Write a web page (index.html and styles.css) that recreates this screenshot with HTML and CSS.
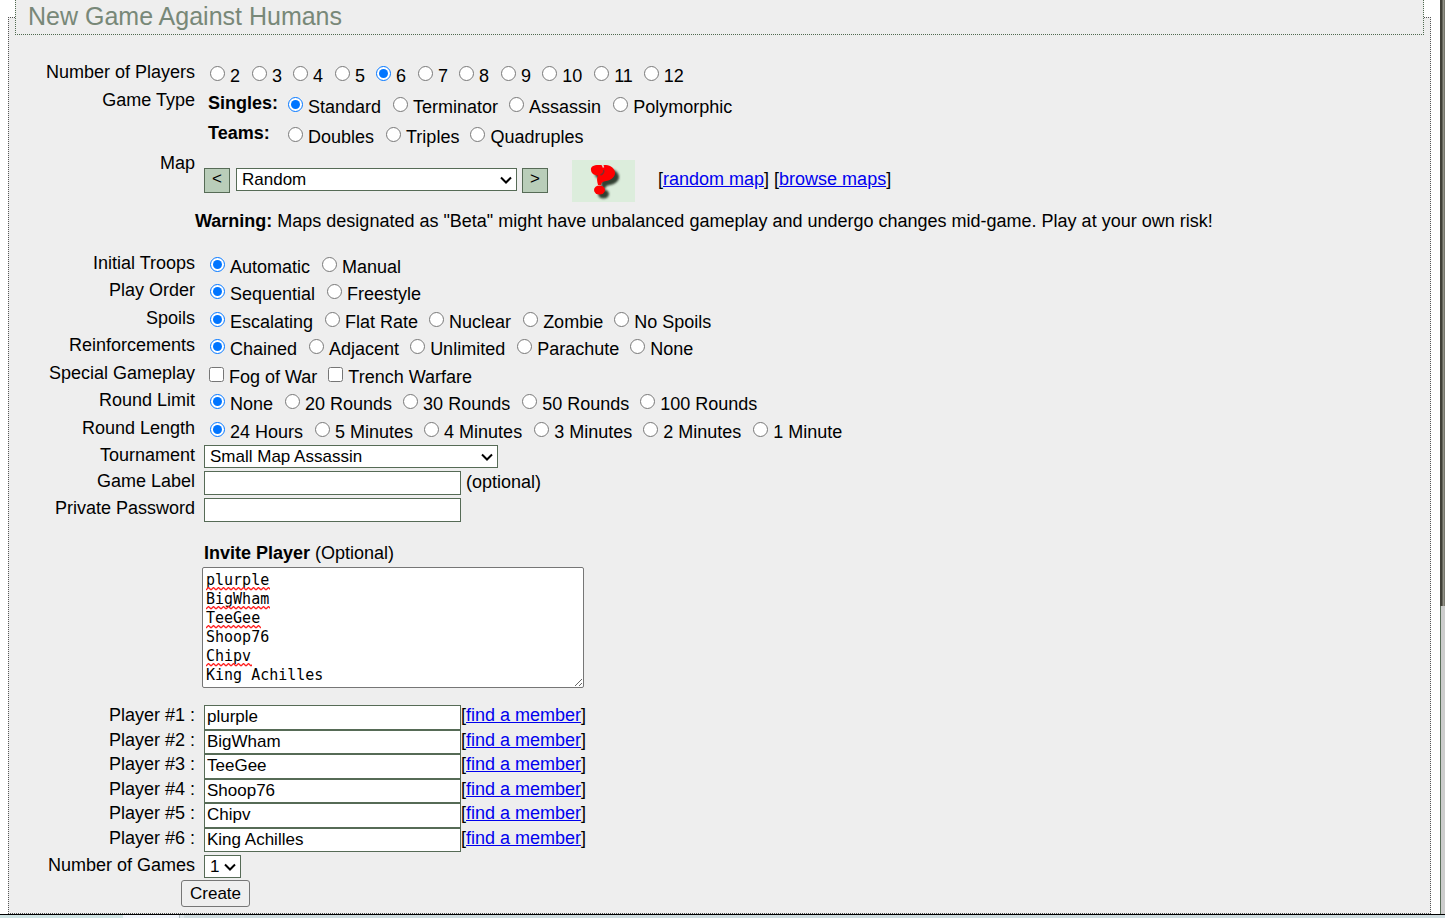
FILE: index.html
```html
<!DOCTYPE html>
<html lang="en">
<head>
<meta charset="utf-8">
<title>New Game Against Humans</title>
<link rel="stylesheet" href="styles.css">
</head>
<body>
<div class="viewport">
<main>
<form>
<fieldset class="panel">
<legend class="title">New Game Against Humans</legend>
<div class="row tall" role="radiogroup" aria-labelledby="l-players"><span class="name" id="l-players">Number of Players</span>
<div class="choices">
<label><input type="radio" name="players">2</label><label><input type="radio" name="players">3</label><label><input type="radio" name="players">4</label><label><input type="radio" name="players">5</label><label><input type="radio" name="players" checked>6</label><label><input type="radio" name="players">7</label><label><input type="radio" name="players">8</label><label><input type="radio" name="players">9</label><label><input type="radio" name="players">10</label><label><input type="radio" name="players">11</label><label><input type="radio" name="players">12</label>
</div></div>
<div class="row type" role="radiogroup" aria-labelledby="l-type"><span class="name" id="l-type">Game Type</span>
<div class="types">
<div class="group"><b>Singles:</b><div class="choices"><label><input type="radio" name="type" checked>Standard</label><label><input type="radio" name="type">Terminator</label><label><input type="radio" name="type">Assassin</label><label><input type="radio" name="type">Polymorphic</label></div></div>
<div class="group"><b>Teams:</b><div class="choices"><label><input type="radio" name="type">Doubles</label><label><input type="radio" name="type">Triples</label><label><input type="radio" name="type">Quadruples</label></div></div>
</div></div>
<div class="row"><label class="name" for="map">Map</label>
<div class="map">
<button class="step" type="button" aria-label="Previous map">&lt;</button>
<select id="map" class="map-select"><option>Random</option></select>
<button class="step" type="button" aria-label="Next map">&gt;</button>
<svg class="thumb" viewBox="0 0 63 42" aria-hidden="true">
<defs><filter id="soft" x="-30%" y="-30%" width="160%" height="160%"><feGaussianBlur stdDeviation="1.3"/></filter>
<g id="mark"><path d="M19 10C18 6 24 4 31 5.500C37 3.500 43 8 43 13C43 18 38 20.500 32 21.500C30 22 29.500 23 29 25H26C25 21 24.500 18 26 15.500C22 15.500 19 13 19 10Z"/><ellipse cx="27.500" cy="30" rx="5.500" ry="4.500"/></g></defs>
<rect width="63" height="42" fill="#dceddc"/>
<use href="#mark" x="4" y="4" fill="#334033" filter="url(#soft)"/>
<use href="#mark" fill="#ff0000"/>
<path d="M28.500 15C31 14 32.500 12 31.500 10" fill="none" stroke="#7a3030" stroke-width="1.500"/>
<path d="M30.500 5L31.500 7.500" stroke="#dceddc" stroke-width="1.500"/>
</svg>
<span>[<a href="#random">random map</a>] [<a href="#browse">browse maps</a>]</span>
</div></div>
<p class="warning"><b>Warning:</b> Maps designated as "Beta" might have unbalanced gameplay and undergo changes mid-game. Play at your own risk!</p>
<div class="options">
<div class="row" role="radiogroup" aria-labelledby="l-troops"><span class="name" id="l-troops">Initial Troops</span><div class="choices"><label><input type="radio" name="troops" checked>Automatic</label><label><input type="radio" name="troops">Manual</label></div></div>
<div class="row" role="radiogroup" aria-labelledby="l-order"><span class="name" id="l-order">Play Order</span><div class="choices"><label><input type="radio" name="order" checked>Sequential</label><label><input type="radio" name="order">Freestyle</label></div></div>
<div class="row" role="radiogroup" aria-labelledby="l-spoils"><span class="name" id="l-spoils">Spoils</span><div class="choices"><label><input type="radio" name="spoils" checked>Escalating</label><label><input type="radio" name="spoils">Flat Rate</label><label><input type="radio" name="spoils">Nuclear</label><label><input type="radio" name="spoils">Zombie</label><label><input type="radio" name="spoils">No Spoils</label></div></div>
<div class="row" role="radiogroup" aria-labelledby="l-reinf"><span class="name" id="l-reinf">Reinforcements</span><div class="choices"><label><input type="radio" name="reinf" checked>Chained</label><label><input type="radio" name="reinf">Adjacent</label><label><input type="radio" name="reinf">Unlimited</label><label><input type="radio" name="reinf">Parachute</label><label><input type="radio" name="reinf">None</label></div></div>
<div class="row" role="group" aria-labelledby="l-special"><span class="name" id="l-special">Special Gameplay</span><div class="choices checks"><label><input type="checkbox" name="fog">Fog of War</label><label><input type="checkbox" name="trench">Trench Warfare</label></div></div>
<div class="row" role="radiogroup" aria-labelledby="l-limit"><span class="name" id="l-limit">Round Limit</span><div class="choices"><label><input type="radio" name="limit" checked>None</label><label><input type="radio" name="limit">20 Rounds</label><label><input type="radio" name="limit">30 Rounds</label><label><input type="radio" name="limit">50 Rounds</label><label><input type="radio" name="limit">100 Rounds</label></div></div>
<div class="row" role="radiogroup" aria-labelledby="l-length"><span class="name" id="l-length">Round Length</span><div class="choices"><label><input type="radio" name="length" checked>24 Hours</label><label><input type="radio" name="length">5 Minutes</label><label><input type="radio" name="length">4 Minutes</label><label><input type="radio" name="length">3 Minutes</label><label><input type="radio" name="length">2 Minutes</label><label><input type="radio" name="length">1 Minute</label></div></div>
</div>
<div class="row"><label class="name" for="tournament">Tournament</label><select id="tournament" class="tournament"><option>Small Map Assassin</option></select></div>
<div class="row field"><label class="name" for="label">Game Label</label><input id="label" class="text" type="text"><span class="hint">(optional)</span></div>
<div class="row field"><label class="name" for="password">Private Password</label><input id="password" class="text" type="text"></div>
<div class="invite">
<label for="invite"><b>Invite Player</b> (Optional)</label>
<div class="invite-box">
<textarea id="invite" spellcheck="false">plurple
BigWham
TeeGee
Shoop76
Chipv
King Achilles</textarea>
<svg class="spelling" width="70" height="120" aria-hidden="true">
<defs><pattern id="wave" y="1" width="5" height="19" patternUnits="userSpaceOnUse"><path d="M0 3L2.500 0.500L5 3" fill="none" stroke="#ff2020" stroke-width="1.300"/></pattern></defs>
<g fill="url(#wave)"><rect y="20" width="64" height="4"/><rect y="39" width="64" height="4"/><rect y="58" width="55" height="4"/><rect y="96" width="46" height="4"/></g>
</svg>
</div></div>
<div class="members">
<div class="row"><label class="name" for="p1">Player #1 :</label><input id="p1" class="text" type="text" value="plurple"><span>[<a href="#find1">find a member</a>]</span></div>
<div class="row"><label class="name" for="p2">Player #2 :</label><input id="p2" class="text" type="text" value="BigWham"><span>[<a href="#find2">find a member</a>]</span></div>
<div class="row"><label class="name" for="p3">Player #3 :</label><input id="p3" class="text" type="text" value="TeeGee"><span>[<a href="#find3">find a member</a>]</span></div>
<div class="row"><label class="name" for="p4">Player #4 :</label><input id="p4" class="text" type="text" value="Shoop76"><span>[<a href="#find4">find a member</a>]</span></div>
<div class="row"><label class="name" for="p5">Player #5 :</label><input id="p5" class="text" type="text" value="Chipv"><span>[<a href="#find5">find a member</a>]</span></div>
<div class="row"><label class="name" for="p6">Player #6 :</label><input id="p6" class="text" type="text" value="King Achilles"><span>[<a href="#find6">find a member</a>]</span></div>
</div>
<div class="row games"><label class="name" for="games">Number of Games</label><select id="games" class="count"><option>1</option></select></div>
<button class="create" type="button">Create</button>
</fieldset>
</form>
</main>
<div class="rail"><div class="thumb-bar"></div></div>
</div>
<div class="strip"></div>
</body>
</html>
```

FILE: styles.css
```css
* { box-sizing: border-box; }
body {
  margin: 0;
  background: #fff;
  color: #000;
  font: 18px/20px "Liberation Sans", Arial, sans-serif;
  min-height: 100vh;
  display: flex;
  flex-direction: column;
}
a { color: #0000ee; }
.viewport { flex: 1; display: grid; grid-template-columns: 1fr 5px; }
main { display: flex; }
form { flex: 1; display: flex; padding: 0 9px 0 8px; }
.panel {
  flex: 1;
  min-width: 0;
  margin: 0;
  padding: 0 6px 5px;
  border: 1px dotted #555;
  background: #eee;
}
.title {
  width: 100%;
  padding: 2px 12px 4px;
  border: 1px dotted #4f6a4f;
  border-top: 0;
  background: #eee;
  color: #788878;
  font-size: 25px;
  line-height: 28px;
  margin-bottom: 27px;
}
.row { display: flex; }
.name { width: 180px; margin-right: 9px; flex: none; text-align: right; }
.tall { min-height: 28px; }
.choices { display: flex; gap: 11px; padding: 4px 0 0 6px; }
.choices label { display: flex; gap: 5px; }
.choices label:nth-child(odd) { margin-right: 1px; }
.choices input { width: 15px; height: 15px; margin: 0; accent-color: #0075ff; }
.choices.checks { gap: 10px; padding-left: 5px; }
.types { padding-top: 3px; }
.group { display: flex; height: 30px; }
.group b { width: 78px; padding-left: 4px; }
.type { min-height: 63px; }
.map { display: flex; padding-top: 7px; height: 49px; }
select, input, button { font: 17px/20px "Liberation Sans", Arial, sans-serif; color: #000; }
.step {
  width: 26px;
  height: 25px;
  margin-top: 8px;
  padding: 0 0 3px;
  border: 1px solid #566b56;
  background: #b9cdb9;
  line-height: 20px;
}
select {
  appearance: none;
  height: 23px;
  padding: 0 20px 0 5px;
  border: 1px solid #566b56;
  border-radius: 0;
  background: #fff url("data:image/svg+xml,%3Csvg xmlns='http://www.w3.org/2000/svg' width='12' height='8'%3E%3Cpath d='M1 1.500L6 6.500L11 1.500' fill='none' stroke='%23000' stroke-width='2'/%3E%3C/svg%3E") no-repeat right 4px center;
}
.map-select { width: 281px; margin: 8px 5px 0 6px; }
.thumb { width: 63px; height: 42px; margin: 0 23px 0 24px; }
.map span { padding-top: 9px; }
.warning { margin: 9px 0 22px 180px; }
.options .row { min-height: 27px; }
.options .row:nth-child(even) { min-height: 28px; }
.field { min-height: 27px; }
.row + .field:not(.field + .field) { margin-top: 3px; }
.text { width: 257px; height: 24px; border: 1px solid #566b56; padding: 1px 3px; background: #fff; }
.tournament { width: 294px; }
.hint { padding: 1px 0 0 5px; }
.invite { padding: 18px 0 0 187px; }
.invite > label { padding-left: 2px; }
.invite-box { position: relative; width: 382px; height: 121px; margin: 4px 0 17px; }
textarea {
  display: block;
  width: 100%;
  height: 100%;
  margin: 0;
  padding: 3px 3px 1px;
  border: 1px solid #767676;
  border-radius: 2px;
  font: 15px/19px "DejaVu Sans Mono", monospace;
  color: #000;
  overflow: hidden;
}
.spelling { position: absolute; left: 4px; top: 0; pointer-events: none; }
.members .row { height: 25px; }
.members .row:nth-child(even) { height: 24px; }
.members .text { height: 100%; padding: 0 2px 1px; }
.games { min-height: 28px; padding-top: 3px; }
.games select { align-self: flex-start; }
.count { width: 37px; }
.create {
  display: block;
  width: 69px;
  height: 27px;
  margin: 0 0 0 166px;
  padding: 0;
  border: 1px solid #767676;
  border-radius: 3px;
  background: #efefef;
}
.rail { border-left: 1px solid #566b56; background: #ccc; }
.thumb-bar {
  height: 66vh;
  margin-left: -1px;
  background: linear-gradient(to right, #414138 0 2px, #66665c 2px 3px, #929288 3px 4px, #77776c 4px 5px);
}
.strip {
  height: 4px;
  border-top: 1px solid #000;
  background: linear-gradient(to right, #cfe3e3 0 123px, #f0f4fa 123px 179px, #aab5b9 179px 180px, #dce6ea 180px 184px, #cfdcdf 184px);
}
```
